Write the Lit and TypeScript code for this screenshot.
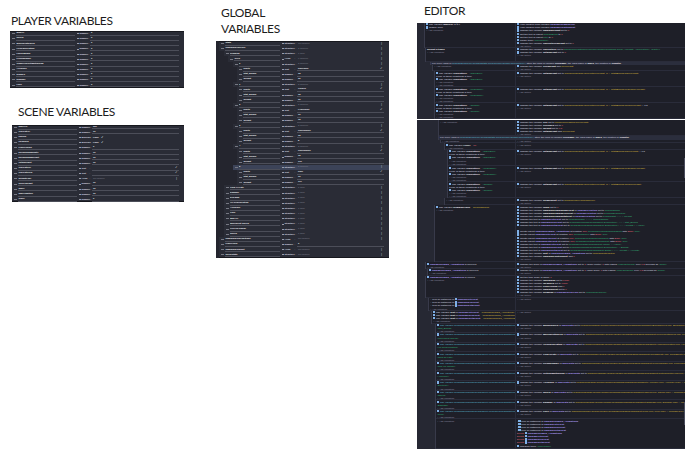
import { LitElement, html, css } from "lit";
import { styleMap } from "lit/directives/style-map.js";

type VarRow = { n: string; lv?: number; t?: string; v?: string; kind?: string; hi?: boolean };

const num = (n: string, v: string, lv = 0): VarRow => ({ n, lv, t: "Number", v, kind: "num" });

const PLAYER: VarRow[] = [
  "MaxHP", "Shield", "MovementSpeed", "HPRegeneration", "LuckyBonus", "PickupRange",
  "ChanceToCritMultiplying", "Accuracy", "Dodges", "Damage", "Luck",
].map((n) => num(n, "0"));

const SCENE: VarRow[] = [
  num("WaveHP", "300"),
  num("CurrentHP", "10"),
  { n: "IsDead", lv: 0, t: "Boolean", v: "False", kind: "bool" },
  { n: "IsPaused", lv: 0, t: "Boolean", v: "False", kind: "bool" },
  num("PlayerCoins", "0"),
  num("EnemySpawnRate", "10"),
  num("EnemySpawnLimit", "10"),
  num("TotalWeight", "10"),
  { n: "CurrentTier", lv: 0, t: "Text", v: "", kind: "text" },
  { n: "CurrentTier2", lv: 0, t: "Text", v: "", kind: "text" },
  { n: "WeightPool", lv: 0, t: "Array", v: "No children", kind: "group" },
  num("ScoreWeight", "10"),
  num("Wave", "10"),
  num("WaveCapture", "10"),
  num("Timer", "0"),
];

const tierRows = (i: number, rarity: string, bonus: string, weight: string, hi = false): VarRow[] => [
  { n: String(i), lv: 3, t: "Structure", v: "3 children", kind: "group", hi },
  { n: "Rarity", lv: 4, t: "Text", v: rarity, kind: "text2" },
  num("Stat_Bonus", bonus, 4),
  num("Weight", weight, 4),
];

const GLOBAL: VarRow[] = [
  { n: "Stats", lv: 0, t: "Structure", v: "No children", kind: "group" },
  { n: "UpgradeDescPool", lv: 0, t: "Structure", v: "2 children", kind: "group" },
  { n: "Rewards", lv: 1, t: "Structure", v: "1 child", kind: "group" },
  { n: "Tiers", lv: 2, t: "Array", v: "6 children", kind: "group" },
  ...tierRows(0, "Rare/Epic", "15", "30"),
  ...tierRows(1, "Golden", "15", "30"),
  ...tierRows(2, "Legendary", "10", "15"),
  ...tierRows(3, "Uncommon", "15", "8"),
  ...tierRows(4, "Uncommon", "15", "110"),
  ...tierRows(5, "Rare", "16", "117", true),
  ...["Gold Of Fate", "Damage", "Dex Max", "HP Regeneration", "Accuracy", "Luck", "Max HP", "Movement Speed", "Pick Up Range", "Shield"].map(
    (n): VarRow => ({ n, lv: 1, t: "Structure", v: "1 child", kind: "group" })
  ),
  { n: "UpgradeDropPositions", lv: 0, t: "Array", v: "No children", kind: "group" },
  num("PlayerCoin", "0"),
  { n: "UpgradeDropSlot", lv: 0, t: "Array", v: "No children", kind: "group" },
  { n: "ScrollState", lv: 0, t: "Structure", v: "No children", kind: "group" },
];

class VarPanel extends LitElement {
  static properties = { rows: { attribute: false }, nameW: { type: Number }, typeW: { type: Number }, base: { type: Number } };
  rows: VarRow[] = [];
  nameW = 65;
  typeW = 15;
  base = 0;
  static styles = css`
    :host { display: block; background: #2a2c36; box-shadow: inset 0 1px 0 #17181e, inset 0 -1px 0 #17181e; font: 2.3px/5.17px "Liberation Sans", sans-serif; color: #d4d5da; }
    .row { display: flex; height: 5.17px; align-items: stretch; white-space: nowrap; position: relative; }
    .row.hi { background: #3c4358; }
    .rail { flex: none; background: #24252e; }
    .namebox { flex: none; display: flex; align-items: center; min-width: 0; }
    .grip { flex: none; width: 3px; margin: 0 1px 0 2px; height: 1px; background: #767883; }
    .name { flex: 1; height: 4.6px; line-height: 3.5px; border-bottom: 1px solid #4c4e59; box-sizing: border-box; overflow: hidden; padding-left: 0.5px; color: #eeeff3; font-weight: 700; }
    .type { flex: none; display: flex; align-items: center; padding-left: 2px; box-sizing: border-box; color: #dadbe0; font-weight: 700; }
    .dot { flex: none; width: 1.8px; height: 1px; background: #9a9ca8; margin-right: 0.7px; }
    .chev { margin-left: auto; margin-right: 1.5px; color: #9a9ca8; font-size: 2px; }
    .val { flex: 1; margin-right: 5px; height: 4.6px; line-height: 3.5px; box-sizing: border-box; padding-left: 1px; display: flex; align-items: center; min-width: 0; font-weight: 700; color: #e6e7ec; }
    .val.line { border-bottom: 1px solid #4c4e59; }
    .val.muted { color: #7f818c; font-weight: 400; }
    .mark { color: #dfe0e5; font-size: 3px; margin-left: 2px; }
    .end { margin-left: auto; color: #c4c5cc; font-size: 3px; padding-right: 1px; }
  `;
  render() {
    return this.rows.map((r) => {
      const lv = r.lv ?? 0;
      const ind = this.base + lv * 4.5;
      const k = r.kind;
      return html`<div class="row ${r.hi ? "hi" : ""}">
        ${ind ? html`<span class="rail" style=${styleMap({ width: `${ind}px` })}></span>` : ""}
        <span class="namebox" style=${styleMap({ width: `${this.nameW - ind}px` })}>
          <span class="grip"></span><span class="name">${r.n}</span>
        </span>
        <span class="type" style=${styleMap({ width: `${this.typeW}px` })}><span class="dot"></span>${r.t}<span class="chev">⌄</span></span>
        <span class="val ${k === "num" || k === "text" || k === "text2" ? "line" : ""} ${k === "group" ? "muted" : ""}">
          ${r.v}
          ${k === "bool" ? html`<span class="mark">✓</span>` : ""}
          ${k === "text" || k === "text2" ? html`<span class="end">✓</span>` : ""}
          ${k === "group" ? html`<span class="end">⋮</span>` : ""}
        </span>
      </div>`;
    });
  }
}
customElements.define("var-panel", VarPanel);

/* ---------- event sheet data ---------- */
type Ev = { h: number; x: number; l: string[]; r: string[]; strip?: boolean };

const addC = "{m:+ Add condition}";
const addA = "{m:+ Add action}";
const chg = (name: string, rest: string) => `{i:}Change the variable {w:${name}} ${rest}`;
const tierExpr = (t: string) => `set to {y:RandomInRange(CurrentTierWeight, 0) + StatsBonus(${t}Weight)}`;
const tierBlock = (x: number, h: number, name: string, t: string, tail = ""): Ev => ({
  h,
  x,
  l: [
    `{i:}The variable {w:CurrentTier} = {g:"${name}"}`,
    "If one of these conditions is true:",
    `{i:}The variable {w:CurrentTier} = {g:"${name}"}`,
    addC,
    addC,
  ],
  r: [chg("TotalWeight", tierExpr(t) + tail), addA],
});
const waveRow = (stat: string, fn: string): Ev => ({
  h: 9.6,
  x: 19,
  l: [
    `{i:}{c:The variable Rewards[UpgradeRewardSlot].UpgradeRewardStat[UpgradeTier]  =}`,
    `{g:"${stat}"}`,
    addC,
  ],
  r: [
    `{i:}Change the variable {w:${fn}} of {p:WaveData} set to {y:RandomInRange(GlobalVariable(Rewards[UpgradeRewardSlot])${fn}.Min, ${fn}.Max) + UpgradeTier.Stat_Bonus}`,
    addA,
  ],
});

const strip = "For every child in {c:UpgradeDescPool.RewardStats.Tiers(GlobalVariable(CurrentTier))}, store the child in variable {w:TierName}, the child name in {w:Index}, the position in {w:Counter}";

const EVENTS: (Ev | "sep")[] = [
  {
    h: 25, x: 8,
    l: ["{i:}The variable {w:WaveHP} is ≥ 0", "{i:}Trigger once", addC],
    r: [
      "{i:}Hide children from variable {p:UpgradeRewardPool}",
      "{i:}Hide children from variable {p:UpgradePositionSlot}",
      "{i:}Change the variable {w:UpgradeCount} set to {r:0}",
      "{i:}Set the text of object {g:RewardDesc} to {r:0}",
      "{i:}Set the text of object {g:Title} to {r:0}",
      "{i:}Pause timer {g:\"WaveTimer\"}",
      "{i:}Change the variable {w:CurrentTierWeight} set to {r:0}",
      addA,
    ],
  },
  {
    h: 13.6, x: 9,
    l: ["{w:Repeat 3 times}", addC],
    r: [
      "{i:}Change the variable {w:CurrentTier} set to {g:RandomWeightedTier(GlobalVariable(Rewards.Tiers), \"Weight\", \"CurrentTier\", \"Rarity\")}",
      "{i:}Change the variable {w:TotalWeight} set to {r:0}",
      addA,
    ],
  },
  { h: 3.2, x: 14, strip: true, l: [strip], r: [] },
  { h: 6.6, x: 16, l: [addC], r: ["{i:}Change the variable {w:TierWeight} add {y:TierWeight}", addA] },
  tierBlock(18, 16, "Rare/Epic", "Rare"),
  tierBlock(18, 16, "Legendary", "Legendary"),
  tierBlock(18, 16, "Golden", "Golden", " + 0.5"),
  "sep",
  {
    h: 16, x: 22,
    l: [addC],
    r: [
      "{i:}Change the variable {w:Tier} set to {y:RandomWeighted(TierWeight)}",
      "{i:}Change the variable {w:TierIndex} set to {r:0}",
      "{i:}Change the variable {w:Weight} set to {r:0.5}",
      "{i:}Change the variable {w:TotalWeight} add {y:TierWeight}",
      addA,
    ],
  },
  { h: 3.2, x: 22, strip: true, l: [strip], r: [] },
  { h: 3.8, x: 24, l: [addC], r: [addA] },
  { h: 6.6, x: 28, l: ["{i:}The variable {w:Hover} = {r:10}", addC], r: [addA] },
  tierBlock(31, 16.4, "Rare/Epic", "Rare", " + 0.5"),
  tierBlock(31, 16, "Legendary", "Legendary"),
  tierBlock(31, 16, "Golden", "Golden"),
  { h: 7, x: 28, l: [addC], r: ["{i:}Change the variable {w:RewardSlot} set to {y:RandomIndex(RewardPool)}", addA] },
  {
    h: 57, x: 18,
    l: ["{i:}The variable {w:RewardsOpen} = {y:RewardsShow}", addC],
    r: [
      "{i:}Change the variable {w:Index} set to {r:0}",
      "{i:}Change the variable {w:UpgradeRewardNameText} of {p:UpgradePosition} set to {g:RewardName}",
      "{i:}Change the variable {w:UpgradeRewardDescText} of {p:UpgradePosition} set to {g:RewardDescription}",
      "{i:}Change the variable {w:UpgradeRewardStatText} of {p:UpgradePosition} set to {g:RewardStat + \" \" + Weight}",
      "{i:}Change the text of {p:UpgradeTitleText} set to {g:UpgradeName + \" \" + RewardName}",
      "{i:}Change the text of {p:UpgradeDescText} set to {g:Rewards[UpgradeRewardSlot].Description + \" \" + Stat_Bonus}",
      "{i:}Change the text of {p:UpgradeDetailText} set to {g:Rewards[UpgradeRewardSlot].Description + \" \" + Weight + \" Value\"}",
      " ",
      "{i:}Create object {p:UpgradeReward_Animations} at position {r:130;} {g:Rewards[UpgradeRewardSlot]} with {r:Base} {g:\"Tier\"}",
      "{i:}Create object {p:UpgradeTitleText} at position {r:150;} {g:Rewards[Tier]} with {r:Base} {g:\"Tier\"}",
      "{i:}Create object {p:UpgradeDescText} at position {r:160;} {g:Rewards[UpgradeRewardSlot]} with {r:Base} {g:\"Tier\"}",
      "{i:}Create object {p:UpgradeDetailText} at position {r:170;} {g:Rewards[UpgradeRewardSlot]} with {r:Base} {g:\"Tier\"}",
      "{i:}Change the text of {p:UpgradeTitleText} set to {g:Rewards[UpgradeRewardSlot].Name + \" Value\"}",
      "{i:}Change the text of {p:UpgradeDescText} set to {g:Rewards[UpgradeRewardSlot].Description + \" Bonus\"}",
      "{i:}Change the text of {p:UpgradeDetailText} set to {g:Rewards[UpgradeRewardSlot].Detail + \" \" + Weight + \" Points\"}",
      "{i:}Change the variable {w:Slot} of {p:UpgradeReward_Animations} set to {y:RewardSlotPosition}",
      "{i:}Change the variable {w:UpgradePositionSlot} add {r:1}",
      addA,
    ],
  },
  {
    h: 6.6, x: 9,
    l: ["{i:}{p:UpgradeReward_Animations} is hovered", addC],
    r: ["{i:}Change the scale of {p:UpgradeReward_Animations} set to {r:1} (scale center: {r:1} with easing {g:\"easeOutQuad\"} over {r:0.2} seconds as {g:\"Scale\"}", addA],
  },
  {
    h: 6.6, x: 11,
    l: ["{i:}{p:UpgradeReward_Animations} is hovered", addC],
    r: ["{i:}Change the scale of {p:UpgradeReward_Animations} set to {r:1} (base scale: {r:1} with easing {g:\"easeOutQuad\"} over {r:0.2} seconds as {g:\"Scale\"}", addA],
  },
  {
    h: 22.4, x: 9,
    l: ["{i:}{p:UpgradeReward_Animations} is clicked", addC],
    r: [
      "{i:}Set the time scale of game {r:1}",
      "{i:}Change the variable {w:IsRewards} set to {r:False}",
      "{i:}Change the variable {w:IsPaused} set to {r:False}",
      "{i:}Change the variable {w:PlayerCoins} add {r:1}",
      "{i:}Change the variable {w:UpgradeSlot} set to {r:0}",
      "{i:}Change the variable {w:Rewards} of {p:UpgradeDescPool} set to {g:UpgradeDescPool}",
      addA,
    ],
  },
  {
    h: 12.8, x: 12,
    l: ["{m:+} Pick all instances of {i:}{p:UpgradeTitleText}", "{m:+} Pick all instances of {i:}{p:UpgradeDescText}", "{m:+} Pick all instances of {i:}{p:UpgradeDetailText}", addC],
    r: [addA],
  },
  {
    h: 12.8, x: 15,
    l: [
      "{i:}The variable {w:Slot} of {p:UpgradeTitleText} = {y:UpgradeReward_Animations.Variable(Slot)}",
      "{i:}The variable {w:Slot} of {p:UpgradeDescText} = {y:UpgradeReward_Animations.Variable(Slot)}",
      "{i:}The variable {w:Slot} of {p:UpgradeDetailText} = {y:UpgradeReward_Animations.Variable(Slot)}",
      addC,
    ],
    r: [addA],
  },
  ...[
    ["Stat_Bonus", "BonusSpeed"], ["Movement Speed", "MovementSpeed"], ["HP Regeneration", "HPRegeneration"], ["Gold Of Fate", "GoldOfFate"],
    ["Pick Up Range", "PickupRange"], ["Accuracy", "CriticalMultiplying"], ["Dexterity", "Accuracy"], ["Shield", "Shield"], ["Damage", "Damage"], ["Luck", "Luck"],
  ].map(([a, b]) => waveRow(a, b)),
  {
    h: 29.8, x: 19,
    l: [addC],
    r: [
      "{m:+}{i:}Pick all instances of {p:UpgradeReward_Animations}",
      "{m:+}{i:}Pick all instances of {p:UpgradeTitleText}",
      "{m:+}{i:}Pick all instances of {p:UpgradeDescText}",
      "{m:+}{i:}Pick all instances of {p:UpgradeDetailText}",
      "{r:Delete} {i:}{p:UpgradeReward_Animations}",
      "{r:Delete} {i:}{p:UpgradeTitleText}",
      "{r:Delete} {i:}{p:UpgradeDescText}",
      "{r:Delete} {i:}{p:UpgradeDetailText}",
      "{i:}Unpause timer {g:\"WaveTimer\"}",
      addA,
    ],
  },
];

const parse = (src: string) => {
  const out: unknown[] = [];
  const re = /\{(\w):([^}]*)\}|[^{]+/g;
  let m: RegExpExecArray | null;
  while ((m = re.exec(src))) {
    if (!m[1]) out.push(m[0]);
    else if (m[1] === "i") out.push(html`<span class="ic"></span>`);
    else out.push(html`<span class=${m[1]}>${m[2]}</span>`);
  }
  return out;
};

class EventSheet extends LitElement {
  static styles = css`
    :host { display: block; position: relative; background: #1e1f28; font: 2.5px/3.1px "Liberation Sans", sans-serif; color: #dcdde3; overflow: hidden; }
    .ev { display: flex; box-sizing: border-box; box-shadow: inset 0 -1px 0 #2a2c3a; overflow: hidden; }
    .gut { flex: none; background: #262833; box-sizing: border-box; border-right: 1px solid #383a4a; }
    .left { flex: none; box-sizing: border-box; padding: 0.3px 0 0 1px; overflow: hidden; border-right: 1px solid #2a2c3a; }
    .right { flex: 1; min-width: 0; padding: 0.3px 0 0 1px; overflow: hidden; }
    .ln { white-space: nowrap; height: 3.1px; }
    .strip { flex: 1; background: #2b2e3d; padding-left: 1px; white-space: nowrap; overflow: hidden; line-height: 3.2px; }
    .sep { height: 1px; background: #fff; }
    .ic { display: inline-block; width: 2.2px; height: 2.2px; background: #7fb0e6; margin-right: 0.7px; vertical-align: -0.2px; }
    .w { color: #f2f2f6; font-weight: 700; }
    .g { color: #35b87a; }
    .y { color: #d6ba3e; }
    .p { color: #ae9ef8; font-weight: 700; }
    .r { color: #e2697a; }
    .c { color: #5dbcd2; }
    .m { color: #8d8fa2; }
    .bar { position: absolute; right: 0; width: 1px; background: #4a4c5c; }
    .bar.a { top: 135px; height: 20px; }
    .bar.b { top: 379px; height: 23px; }
  `;
  render() {
    return html`${EVENTS.map((e) => {
      if (e === "sep") return html`<div class="sep"></div>`;
      if (e.strip)
        return html`<div class="ev" style=${styleMap({ height: `${e.h}px` })}>
          <span class="gut" style=${styleMap({ width: `${e.x}px` })}></span>
          <div class="strip">${parse(e.l[0])}</div>
        </div>`;
      return html`<div class="ev" style=${styleMap({ height: `${e.h}px` })}>
        <span class="gut" style=${styleMap({ width: `${e.x}px` })}></span>
        <div class="left" style=${styleMap({ width: `${99 - e.x}px` })}>
          ${e.l.map((l) => html`<div class="ln">${parse(l)}</div>`)}
        </div>
        <div class="right">${e.r.map((l) => html`<div class="ln">${parse(l)}</div>`)}</div>
      </div>`;
    })}
    <span class="bar a"></span><span class="bar b"></span>`;
  }
}
customElements.define("event-sheet", EventSheet);

class AppRoot extends LitElement {
  static styles = css`
    :host { display: block; width: 690px; height: 452px; background: #fff; overflow: hidden; }
    .page { display: flex; width: 690px; height: 452px; }
    .col { flex: none; display: flex; flex-direction: column; }
    .c1 { width: 174px; margin-left: 10px; }
    .c2 { width: 173px; margin-left: 32px; }
    .c3 { width: 268px; margin-left: 28px; }
    h2 { margin: 0; font: 400 12px/16.5px Lato, "Open Sans", sans-serif; letter-spacing: -0.35px; color: #1c1c1c; }
    .t1 { padding: 13px 0 1.5px 1px; }
    .t2 { padding: 16px 0 4.5px 8px; }
    .t3 { padding: 4.5px 0 3.5px 5px; }
    .t4 { padding: 3px 0 3.5px 7px; }
    .p2 { margin-left: 2px; }
  `;
  render() {
    return html`<div class="page">
      <div class="col c1">
        <h2 class="t1">PLAYER VARIABLES</h2>
        <var-panel .rows=${PLAYER}></var-panel>
        <h2 class="t2">SCENE VARIABLES</h2>
        <var-panel class="p2" .rows=${SCENE}></var-panel>
      </div>
      <div class="col c2">
        <h2 class="t3">GLOBAL<br />VARIABLES</h2>
        <var-panel .rows=${GLOBAL} .nameW=${64} .typeW=${17} .base=${3}></var-panel>
      </div>
      <div class="col c3">
        <h2 class="t4">EDITOR</h2>
        <event-sheet></event-sheet>
      </div>
    </div>`;
  }
}
customElements.define("app-root", AppRoot);
